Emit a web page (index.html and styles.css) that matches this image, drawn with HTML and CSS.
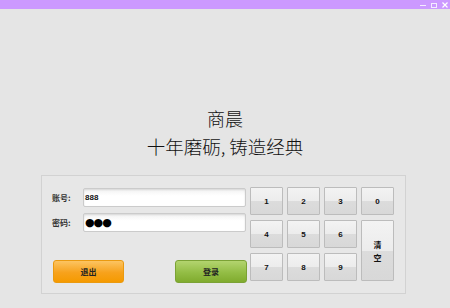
FILE: index.html
```html
<!DOCTYPE html>
<html lang="zh">
<head>
<meta charset="utf-8">
<link rel="stylesheet" href="styles.css">
</head>
<body>
<div class="titlebar">
  <div class="winctl">
    <svg width="6" height="6" viewBox="0 0 6 6"><rect x="0" y="3" width="6" height="1" fill="#f4ecff"/></svg>
    <svg width="6" height="6" viewBox="0 0 6 6"><rect x="0.5" y="1.5" width="5" height="4" fill="none" stroke="#f4ecff" stroke-width="1"/></svg>
    <svg width="6" height="6" viewBox="0 0 6 6"><path d="M0.5 0.5 L5.5 5.5 M5.5 0.5 L0.5 5.5" stroke="#ffffff" stroke-width="1.2"/></svg>
  </div>
</div>
<main class="main">
  <div class="brand">
    <div class="brand-name">商晨</div>
    <div class="brand-slogan">十年磨砺, 铸造经典</div>
  </div>
  <section class="panel">
    <div class="form">
      <div class="field">
        <span class="label">账号:</span>
        <div class="input">888</div>
      </div>
      <div class="field">
        <span class="label">密码:</span>
        <div class="input dots">●●●</div>
      </div>
      <div class="actions">
        <button class="btn exit">退出</button>
        <button class="btn login">登录</button>
      </div>
    </div>
    <div class="keypad">
      <button class="key">1</button>
      <button class="key">2</button>
      <button class="key">3</button>
      <button class="key">0</button>
      <button class="key">4</button>
      <button class="key">5</button>
      <button class="key">6</button>
      <button class="key clear">清<br>空</button>
      <button class="key">7</button>
      <button class="key">8</button>
      <button class="key">9</button>
    </div>
  </section>
</main>
</body>
</html>
```

FILE: styles.css
```css
* { box-sizing: border-box; }
html, body { margin: 0; padding: 0; }
body {
  width: 450px;
  height: 308px;
  background: #e5e5e5;
  font-family: "Liberation Sans", "Noto Sans CJK SC", sans-serif;
  overflow: hidden;
}
.titlebar {
  height: 9px;
  background: #cc99ff;
  display: flex;
  justify-content: flex-end;
  align-items: center;
}
.winctl {
  display: flex;
  gap: 5px;
  padding-right: 2px;
  height: 9px;
  align-items: center;
}
.winctl svg { display: block; }
.main {
  display: flex;
  flex-direction: column;
  align-items: center;
  padding-top: 97px;
}
.brand {
  text-align: center;
  font-family: "Noto Sans CJK SC", sans-serif;
  color: #111;
  font-weight: 300;
}
.brand-name {
  font-size: 18px;
  line-height: 24px;
  height: 24px;
}
.brand-slogan {
  font-size: 18.5px;
  line-height: 24px;
  height: 24px;
  margin-top: 4px;
}
.panel {
  align-self: flex-start;
  margin-left: 41px;
  margin-top: 17px;
  width: 365px;
  height: 119px;
  border: 1px solid #d2d2d2;
  background: #e7e7e7;
  display: flex;
  padding: 11px 11px 12px 10px;
  gap: 3px;
}
.form {
  width: 196px;
  display: flex;
  flex-direction: column;
}
.field {
  display: flex;
  align-items: center;
  height: 19px;
  margin-top: 1px;
}
.field + .field { margin-top: 6px; }
.label {
  width: 31px;
  font-family: "Noto Sans CJK SC", sans-serif;
  font-size: 8px;
  font-weight: 700;
  color: #333;
}
.input {
  width: 163px;
  height: 19px;
  border: 1px solid #cbcbcb;
  border-radius: 2px;
  background: linear-gradient(#f2f2f2, #ffffff 40%);
  box-shadow: inset 0 1px 2px rgba(0,0,0,0.12);
  font-size: 8px;
  font-weight: 700;
  line-height: 17px;
  padding-left: 1px;
  color: #111;
}
.input.dots {
  font-family: "DejaVu Sans", sans-serif;
  font-size: 11px;
  font-weight: 400;
  letter-spacing: -1px;
  color: #000;
  padding-left: 1px;
}
.actions {
  display: flex;
  justify-content: space-between;
  margin-top: 28px;
  padding-left: 1px;
}
.btn {
  width: 72px;
  height: 23px;
  border-radius: 3px;
  font-family: "Noto Sans CJK SC", sans-serif;
  font-size: 8px;
  font-weight: 700;
  color: #222;
  padding: 0;
}
.btn.exit {
  width: 71px;
  border: 1px solid #ea9a10;
  background: linear-gradient(#fcc462, #f7a21c 55%, #f59a00);
}
.btn.login {
  border: 1px solid #7ba235;
  background: linear-gradient(#b3d46f, #93bd45 55%, #80ab2e);
}
.keypad {
  display: grid;
  grid-template-columns: repeat(4, 33px);
  grid-template-rows: repeat(3, 28px);
  column-gap: 4px;
  row-gap: 5px;
}
.key {
  border: 1px solid #bcbcbc;
  border-radius: 1px;
  background: linear-gradient(#f3f3f3, #ececec 50%, #dcdcdc 50%, #d8d8d8);
  font-family: "Liberation Sans", "Noto Sans CJK SC", sans-serif;
  font-size: 8px;
  font-weight: 700;
  color: #111;
  padding: 0;
}
.key.clear {
  grid-column: 4;
  grid-row: 2 / span 2;
  line-height: 13px;
  font-family: "Noto Sans CJK SC", sans-serif;
}
```
